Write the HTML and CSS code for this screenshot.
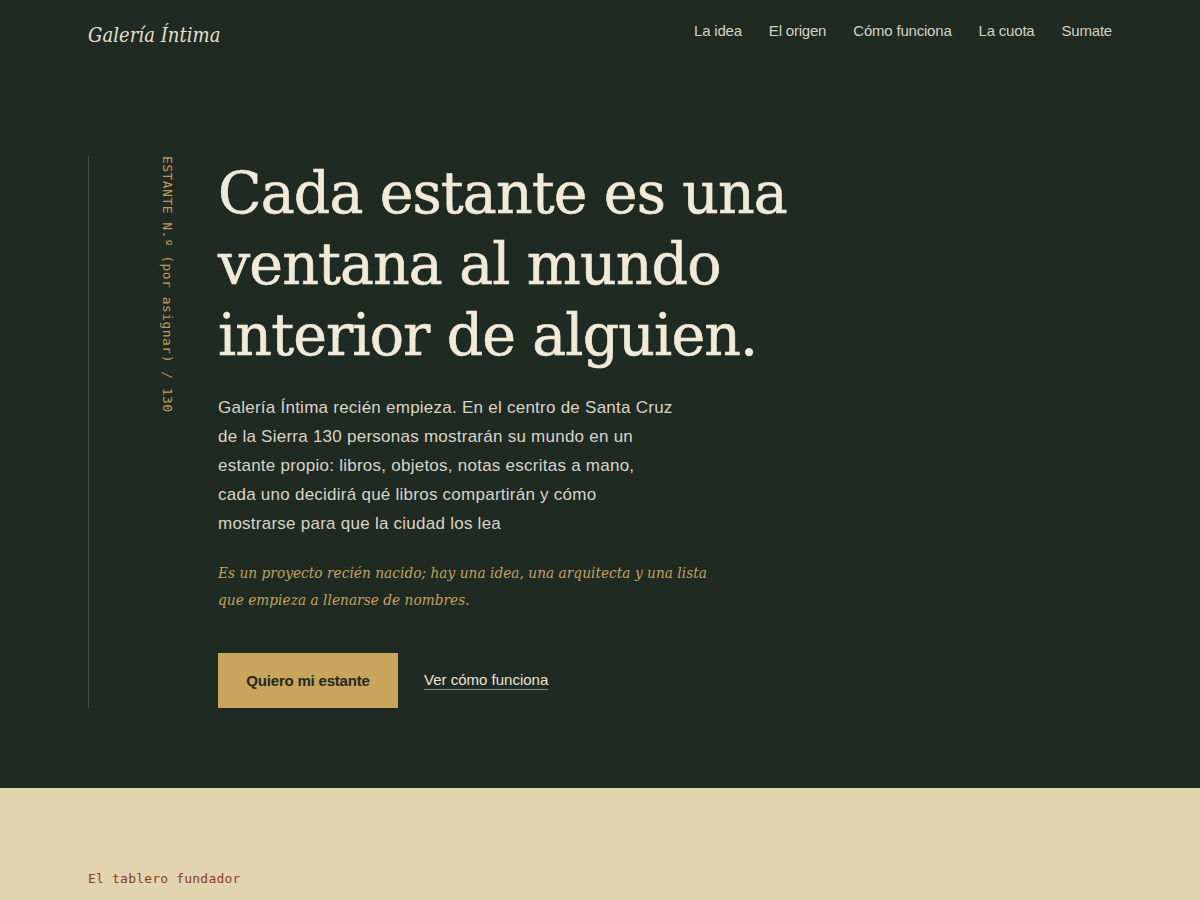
FILE: index.html
```html
<!DOCTYPE html>
<html lang="es">
<head>
<meta charset="utf-8">
<title>Galería Íntima</title>
<link rel="stylesheet" href="styles.css">
</head>
<body>
<header class="site-header">
  <div class="container header-inner">
    <a class="logo" href="#">Galería Íntima</a>
    <nav class="nav">
      <a href="#">La idea</a>
      <a href="#">El origen</a>
      <a href="#">Cómo funciona</a>
      <a href="#">La cuota</a>
      <a href="#">Sumate</a>
    </nav>
  </div>
</header>
<section class="hero">
  <div class="container hero-inner">
    <div class="rail"><span class="rail-text">ESTANTE N.º (por asignar) / 130</span></div>
    <div class="hero-content">
      <h1 class="hero-title">Cada estante es una ventana al mundo interior de alguien.</h1>
      <p class="hero-lead">Galería Íntima recién empieza. En el centro de Santa Cruz<br>de la Sierra 130 personas mostrarán su mundo en un<br>estante propio: libros, objetos, notas escritas a mano,<br>cada uno decidirá qué libros compartirán y cómo<br>mostrarse para que la ciudad los lea</p>
      <p class="hero-note">Es un proyecto recién nacido; hay una idea, una arquitecta y una lista<br>que empieza a llenarse de nombres.</p>
      <div class="hero-actions">
        <a class="btn" href="#">Quiero mi estante</a>
        <a class="link" href="#">Ver cómo funciona</a>
      </div>
    </div>
  </div>
</section>
<section class="board">
  <div class="container">
    <p class="eyebrow">El tablero fundador</p>
  </div>
</section>
</body>
</html>
```
FILE: styles.css
```css
* { box-sizing: border-box; }
html, body { margin: 0; padding: 0; }
body {
  background: #1f2a23;
  color: #e9e2cf;
  font-family: "Liberation Sans", Arial, sans-serif;
}
a { color: inherit; text-decoration: none; }
.container { width: 1024px; margin: 0 auto; }

.site-header { height: 70px; }
.header-inner {
  display: flex;
  justify-content: space-between;
  align-items: flex-start;
}
.logo {
  font-family: "DejaVu Serif", serif;
  font-stretch: condensed;
  font-style: italic;
  font-size: 20px;
  color: #e8e0cc;
  margin-top: 23px;
  letter-spacing: 0.05px;
}
.nav {
  display: flex;
  gap: 27px;
  margin-top: 22px;
}
.nav a {
  font-size: 15px;
  color: #d6d1c2;
  letter-spacing: -0.2px;
}

.hero { padding: 86px 0 80px; }
.hero-inner {
  display: grid;
  grid-template-columns: 129px 1fr;
  border-left: 1px solid #4b524b;
}
.rail { padding-left: 71px; }
.rail-text {
  display: block;
  writing-mode: vertical-rl;
  font-family: "DejaVu Sans Mono", monospace;
  font-size: 13px;
  letter-spacing: 0.45px;
  color: #c09d57;
}
.hero-title {
  margin: 2px 0 0;
  font-family: "DejaVu Serif", serif;
  font-weight: normal;
  font-size: 57px;
  line-height: 71px;
  color: #f2ead9;
  letter-spacing: -0.9px;
  -webkit-text-stroke: 0.6px #f2ead9;
  max-width: 610px;
}
.hero-lead {
  margin: 22px 0 0;
  font-size: 17px;
  line-height: 29px;
  color: #d9d4c6;
  letter-spacing: 0.25px;
}
.hero-note {
  margin: 22px 0 0;
  font-family: "DejaVu Serif", serif;
  font-stretch: condensed;
  font-style: italic;
  font-size: 15.2px;
  line-height: 27px;
  color: #c4a25e;
  letter-spacing: 0.05px;
}
.hero-actions {
  display: flex;
  align-items: center;
  gap: 26px;
  margin-top: 39px;
}
.btn {
  display: inline-flex;
  align-items: center;
  justify-content: center;
  width: 180px;
  height: 55px;
  background: #c9a45c;
  color: #1f2a23;
  font-weight: bold;
  font-size: 15px;
  letter-spacing: -0.2px;
}
.link {
  font-size: 15px;
  color: #ebe4d2;
  border-bottom: 1px solid #8b8d83;
  line-height: 18px;
}

.board {
  background: #e2d4ae;
  padding: 83px 0 40px;
}
.eyebrow {
  margin: 0;
  font-family: "DejaVu Sans Mono", monospace;
  font-size: 13px;
  letter-spacing: 0.2px;
  color: #8c3b25;
}
```
